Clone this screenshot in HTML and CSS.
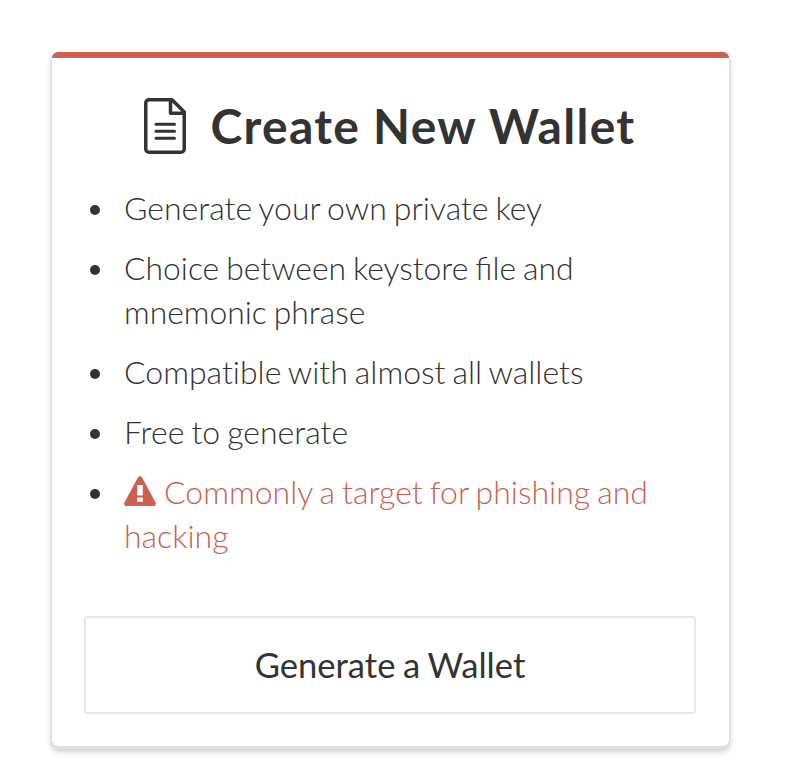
FILE: index.html
```html
<!DOCTYPE html>
<html lang="en">
<head>
<meta charset="utf-8">
<title>Create New Wallet</title>
<link rel="stylesheet" href="styles.css">
</head>
<body>
<main class="card">
  <h1 class="title">
    <svg class="doc" viewBox="0 0 42 56" aria-hidden="true"><path d="M5 1.750H28L40.250 14V51a3.250 3.250 0 0 1-3.250 3.250H5A3.250 3.250 0 0 1 1.750 51V5A3.250 3.250 0 0 1 5 1.750ZM26.500 2V15.250H40"/><path class="lines" d="M12 26.300H30.500M12 33.300H30.500M12 40.300H30.500"/></svg>
    <span>Create New Wallet</span>
  </h1>
  <ul class="features">
    <li>Generate your own private key</li>
    <li class="wrapped">Choice between keystore file and mnemonic phrase</li>
    <li>Compatible with almost all wallets</li>
    <li>Free to generate</li>
    <li><span class="warning"><svg class="alert" viewBox="0 0 32 30" aria-hidden="true"><path fill-rule="evenodd" d="M13.900 1.500Q16-1.200 18.100 1.500L31.600 26.500Q32.800 29.600 30 30H2Q-.8 29.600 .4 26.500ZM13.200 9V19.600H18.800V9ZM13.200 21.600V25.800H18.800V21.600Z"/></svg> Commonly a target for phishing and hacking</span></li>
  </ul>
  <button class="generate" type="button">Generate a Wallet</button>
</main>
</body>
</html>
```
FILE: styles.css
```css
* { box-sizing: border-box; }
body {
  min-height: 776px;
  margin: 0;
  padding: 52px 67px 0 52px;
  background: #fff;
  color: #333;
  font-family: Lato, "Liberation Sans", sans-serif;
}
.card {
  height: 694px;
  padding: 40px 33px 32px 32px;
  display: flex;
  flex-direction: column;
  border-top: 6px solid #cc6150;
  border-radius: 6px;
  box-shadow: 0 2px 0 1.5px #e0e0e0, 0 5px 6px 0 rgba(0, 0, 0, .24);
}
.title {
  display: flex;
  align-items: center;
  justify-content: center;
  gap: 25px;
  height: 56px;
  margin: 0 1px 0 0;
  font-size: 48px;
  font-weight: 700;
  letter-spacing: 1.3px;
  line-height: 54px;
  white-space: nowrap;
}
.doc {
  width: 42px;
  height: 56px;
  fill: none;
  stroke: #333;
  stroke-width: 3.5;
  stroke-linejoin: round;
}
.lines { stroke-width: 3; stroke-linecap: round; }
.features {
  margin: 32px 0 0;
  padding: 0 0 0 40px;
  font-size: 32px;
  font-weight: 300;
  line-height: 44px;
  list-style: none;
  font-variant-ligatures: no-common-ligatures;
  word-spacing: -1.7px;
}
.features li {
  position: relative;
  margin-bottom: 16px;
}
.features li::before {
  content: "";
  position: absolute;
  top: 19px;
  left: -34px;
  width: 10px;
  height: 10px;
  border-radius: 50%;
  background: #333;
}
.features .wrapped {
  font-size: 31.85px;
  font-variant-ligatures: normal;
}
.warning { color: #cc6150; }
.alert {
  width: 32px;
  height: 30px;
  margin-right: 1px;
  vertical-align: -2px;
  fill: currentColor;
}
.generate {
  height: 98px;
  margin-top: auto;
  padding: 0 0 2px;
  border: 2px solid #e7eaed;
  border-radius: 3px;
  background: #fff;
  color: #333;
  font: 400 34.6px Lato, "Liberation Sans", sans-serif;
  word-spacing: -1.2px;
}
```
